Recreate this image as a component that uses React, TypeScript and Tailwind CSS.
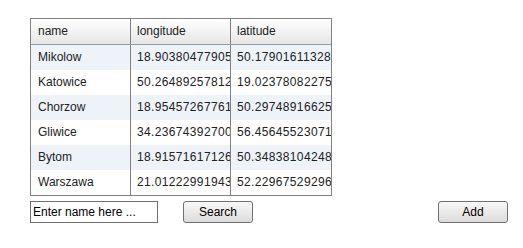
const rows = [
  { name: 'Mikolow', longitude: '18.903804779052734', latitude: '50.179016113281250' },
  { name: 'Katowice', longitude: '50.264892578125000', latitude: '19.023780822753906' },
  { name: 'Chorzow', longitude: '18.954572677612305', latitude: '50.297489166259766' },
  { name: 'Gliwice', longitude: '34.236743927001953', latitude: '56.456455230712890' },
  { name: 'Bytom', longitude: '18.915716171264648', latitude: '50.348381042480470' },
  { name: 'Warszawa', longitude: '21.012229919433594', latitude: '52.229675292968750' },
];

export default function App() {
  return (
    <div
      className="w-[523px] h-[248px] bg-white pl-[30px] pr-[15px] pt-[18px] text-[12px] text-[#222]"
      style={{ fontFamily: '"Liberation Sans", Arial, sans-serif' }}
    >
      {/* Grid */}
      <div className="w-[302px] border border-[#828282]">
        <div className="flex h-[26px] border-b border-[#9a9a9a] bg-gradient-to-b from-white to-[#e6e6e6]">
          <div className="w-[100px] pl-[7px] leading-[25px] border-r border-[#828282]">name</div>
          <div className="w-[100px] pl-[6px] leading-[25px] border-r border-[#828282]">longitude</div>
          <div className="w-[100px] pl-[6px] leading-[25px]">latitude</div>
        </div>
        {rows.map((row, i) => (
          <div
            key={row.name}
            className={`flex h-[25px] leading-[25px] ${i % 2 === 0 ? 'bg-[#eef3fa]' : 'bg-white'}`}
          >
            <div className="w-[100px] pl-[7px] overflow-hidden whitespace-nowrap border-r border-[#828282]">
              {row.name}
            </div>
            <div className="w-[100px] pl-[6px] overflow-hidden whitespace-nowrap tracking-[0.35px] border-r border-[#828282]">
              {row.longitude}
            </div>
            <div className="w-[100px] pl-[6px] overflow-hidden whitespace-nowrap tracking-[0.35px]">
              {row.latitude}
            </div>
          </div>
        ))}
      </div>

      {/* Controls */}
      <div className="flex items-start mt-[5px]">
        <input
          className="w-[128px] h-[22px] border border-[#6f6f6f] px-[2px] text-[12px] text-black outline-none"
          defaultValue="Enter name here ..."
        />
        <button className="ml-[25px] w-[70px] h-[22px] rounded-[3px] border border-[#707070] bg-gradient-to-b from-[#f8f8f8] to-[#dcdcdc] text-[12px] text-black">
          Search
        </button>
        <button className="ml-auto w-[70px] h-[22px] rounded-[3px] border border-[#707070] bg-gradient-to-b from-[#f8f8f8] to-[#dcdcdc] text-[12px] text-black">
          Add
        </button>
      </div>
    </div>
  );
}
